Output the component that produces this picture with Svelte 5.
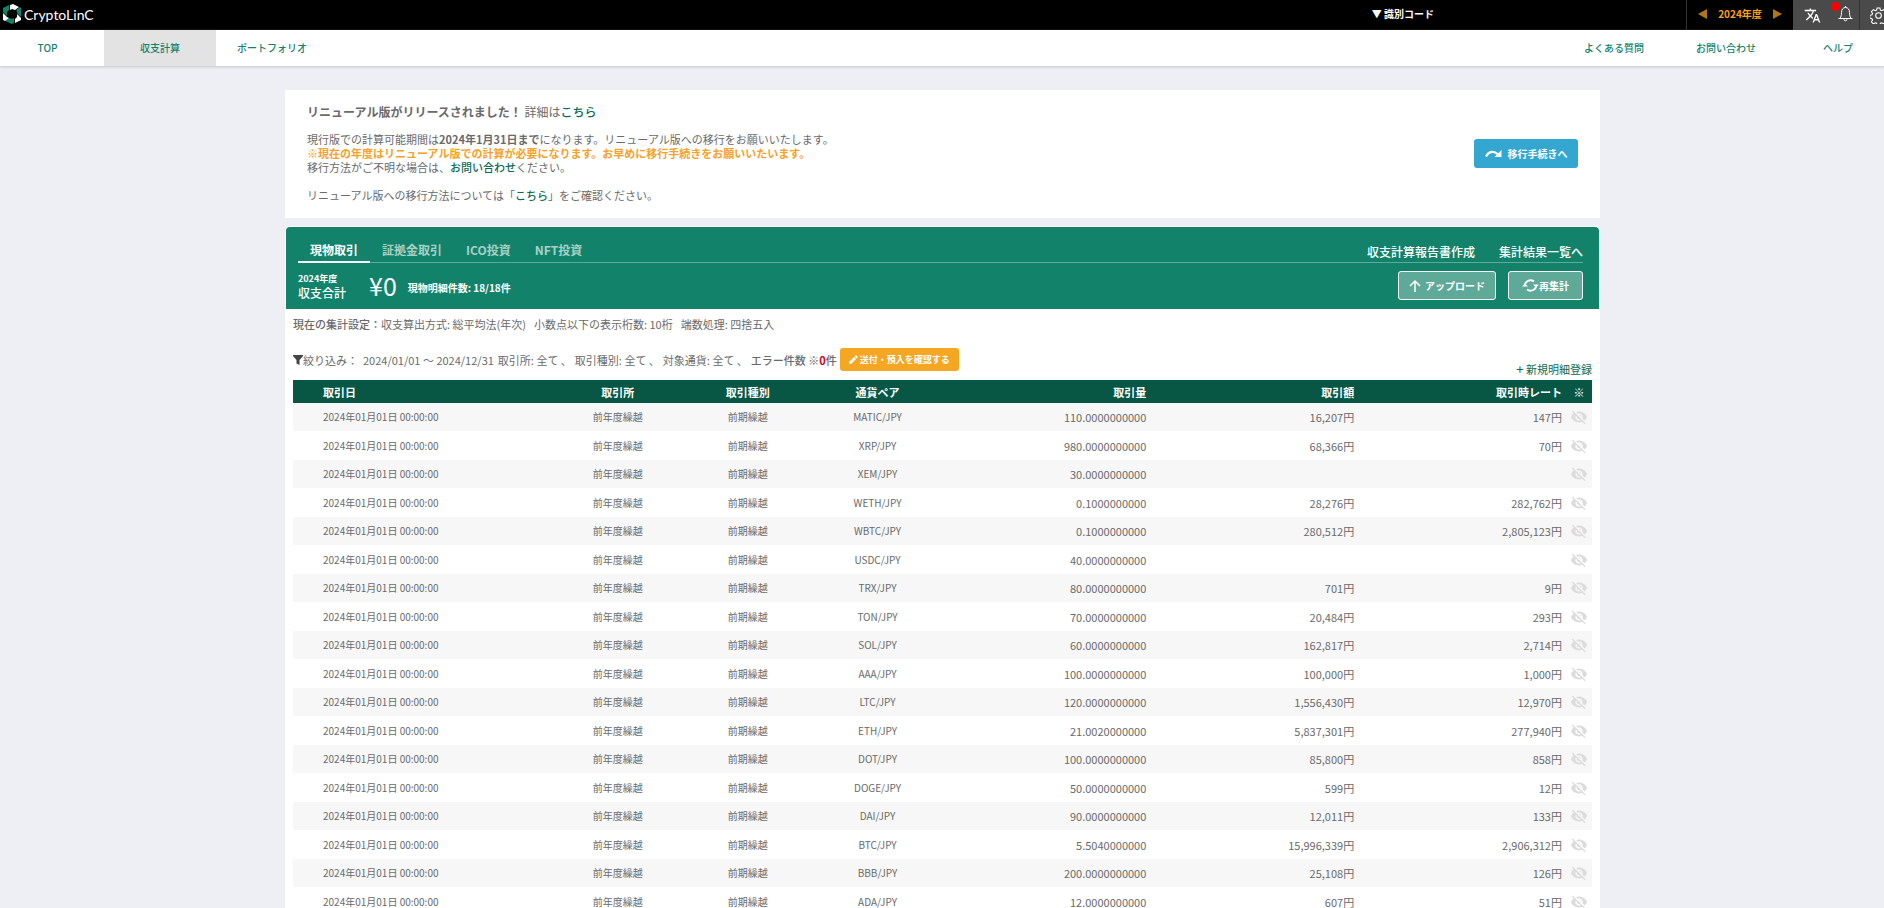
<script lang="ts">
	type Row = { exchange: string; kind: string; pair: string; amount: string; total: string; rate: string };

	let year = $state(2024);
	let activeTab = $state(0);

	const tabs = ['現物取引', '証拠金取引', 'ICO投資', 'NFT投資'];

	const source: [string, string, string, string][] = [
		['MATIC', '110.0000000000', '16,207円', '147円'],
		['XRP', '980.0000000000', '68,366円', '70円'],
		['XEM', '30.0000000000', '', ''],
		['WETH', '0.1000000000', '28,276円', '282,762円'],
		['WBTC', '0.1000000000', '280,512円', '2,805,123円'],
		['USDC', '40.0000000000', '', ''],
		['TRX', '80.0000000000', '701円', '9円'],
		['TON', '70.0000000000', '20,484円', '293円'],
		['SOL', '60.0000000000', '162,817円', '2,714円'],
		['AAA', '100.0000000000', '100,000円', '1,000円'],
		['LTC', '120.0000000000', '1,556,430円', '12,970円'],
		['ETH', '21.0020000000', '5,837,301円', '277,940円'],
		['DOT', '100.0000000000', '85,800円', '858円'],
		['DOGE', '50.0000000000', '599円', '12円'],
		['DAI', '90.0000000000', '12,011円', '133円'],
		['BTC', '5.5040000000', '15,996,339円', '2,906,312円'],
		['BBB', '200.0000000000', '25,108円', '126円'],
		['ADA', '12.0000000000', '607円', '51円']
	];

	const rows: Row[] = source.map(([coin, amount, total, rate]) => ({
		exchange: '前年度繰越',
		kind: '前期繰越',
		pair: `${coin}/JPY`,
		amount,
		total,
		rate
	}));
</script>

<header class="topbar">
	<a class="logo" href="/" aria-label="CryptoLinC">
		<svg width="20" height="22" viewBox="0 0 20 22">
			<path fill="#12836a" d="M1 5 7 2v5L5 9v4l-4-4z" />
			<path fill="#fff" d="M8 2l3-1 6 3-4 3-3-1-2 1z" />
			<path fill="#12836a" d="M14 7l4-3 1 1v9l-4-4V8z" />
			<path fill="#fff" d="M15 11l4 4v2l-6 3v-4l2-2z" />
			<path fill="#12836a" d="M12 20l-2 1-7-3 4-3 3 1 2-1z" />
			<path fill="#fff" d="M1 10l4 4 2 1-4 3-2-1z" />
		</svg>
		<span>CryptoLinC</span>
	</a>
	<button class="code">▼ 識別コード</button>
	<div class="year">
		<button aria-label="前年度" onclick={() => year--}>
			<svg width="9" height="10" viewBox="0 0 9 10"><path d="M9 0v10L0 5z" /></svg>
		</button>
		<span>{year}年度</span>
		<button aria-label="翌年度" onclick={() => year++}>
			<svg width="9" height="10" viewBox="0 0 9 10"><path d="M0 0v10l9-5z" /></svg>
		</button>
	</div>
	<div class="tools">
		<button aria-label="言語">
			<svg width="17" height="17" viewBox="0 0 24 24" fill="#fff">
				<path d="M12.87 15.07l-2.54-2.51.03-.03A17.5 17.5 0 0 0 14.07 6H17V4h-7V2H8v2H1v2h11.17A15.7 15.7 0 0 1 9 11.35 15.6 15.6 0 0 1 6.69 8h-2a17.6 17.6 0 0 0 2.98 4.56l-5.09 5.02L4 19l5-5 3.11 3.11zM18.5 10h-2L12 22h2l1.12-3h4.75L21 22h2zm-2.62 7 1.62-4.33L19.12 17z" />
			</svg>
		</button>
		<button class="bell" aria-label="お知らせ">
			<svg width="17" height="17" viewBox="0 0 17 17" fill="none" stroke="#fff">
				<path d="M1.500 13.500h14M3 13.500c1-2 1.500-3 1.500-6 0-3 1.500-5 4-5s4 2 4 5c0 3 .5 4 1.500 6M7 14c0 2.500 3 2.500 3 0M8.500 2.500V1" />
			</svg>
			<i></i>
		</button>
		<button class="gear" aria-label="設定">
			<svg width="17" height="17" viewBox="0 0 24 24" fill="none" stroke="#fff" stroke-width="1.500">
				<circle cx="12" cy="12" r="4" />
				<path d="M10 1.500h4l.7 3 1.800.8 2.700-1.600 2.900 2.900-1.700 2.600.8 1.900 2.900.7v4l-2.900.7-.8 1.800 1.600 2.600-2.800 2.900-2.700-1.600-1.800.7-.7 3h-4l-.7-3-1.800-.7-2.700 1.600-2.800-2.900 1.600-2.600-.8-1.800-3-.7v-4l3-.7.8-1.900L2 6.600l2.900-2.900 2.600 1.600 1.800-.8z" />
			</svg>
		</button>
	</div>
</header>

<nav class="nav">
	<a class="first" href="#top">TOP</a>
	<a class="current" href="#calc">収支計算</a>
	<a href="#portfolio">ポートフォリオ</a>
	<div class="help">
		<a href="#faq">よくある質問</a>
		<a href="#contact">お問い合わせ</a>
		<a href="#help">ヘルプ</a>
	</div>
</nav>

<main>
	<section class="notice">
		<div>
			<p class="lead"><b>リニューアル版がリリースされました！</b> 詳細は<a href="#detail">こちら</a></p>
			<p>現行版での計算可能期間は<b>2024年1月31日まで</b>になります。リニューアル版への移行をお願いいたします。</p>
			<p class="warn">※現在の年度はリニューアル版での計算が必要になります。お早めに移行手続きをお願いいたいます。</p>
			<p>移行方法がご不明な場合は、<a href="#contact">お問い合わせ</a>ください。</p>
			<p class="last">リニューアル版への移行方法については「<a href="#how">こちら</a>」をご確認ください。</p>
		</div>
		<button class="migrate">
			<svg width="17" height="8" viewBox="0 0 17 8">
				<path d="M1 6.500C4 1 9 .5 13 4.500" fill="none" stroke="#fff" stroke-width="2.200" />
				<path d="M16.500 0v7H9.500z" fill="#fff" />
			</svg>
			移行手続きへ
		</button>
	</section>

	<section class="panel">
		<div class="summary">
			<div class="tabs">
				{#each tabs as tab, i (tab)}
					<button class:active={activeTab == i} onclick={() => (activeTab = i)}>{tab}</button>
				{/each}
				<div class="reports">
					<a href="#report">収支計算報告書作成</a>
					<a href="#result">集計結果一覧へ</a>
				</div>
			</div>
			<div class="totals">
				<div class="label"><small>{year}年度</small>収支合計</div>
				<div class="yen">¥0</div>
				<div class="count">現物明細件数: 18/18件</div>
				<div class="actions">
					<button>
						<svg width="12" height="12" viewBox="0 0 12 12" fill="none" stroke="#fff" stroke-width="1.500"><path d="M6 12V1M1 6l5-5 5 5" /></svg>
						アップロード
					</button>
					<button class="recalc">
						<svg width="17" height="13" viewBox="0 0 17 13">
							<path d="M3 7a5.500 5 0 0 1 9-4.500M14 6a5.500 5 0 0 1-9 4.500" fill="none" stroke="#fff" stroke-width="1.800" />
							<path d="M0 7.500h6L3 4.500zM11 5.500h6l-3 3z" fill="#fff" />
						</svg>
						再集計
					</button>
				</div>
			</div>
		</div>

		<div class="body">
			<p class="settings">
				<span class="strong">現在の集計設定：</span><span>収支算出方式: 総平均法(年次)</span>
				<span>小数点以下の表示桁数: 10桁</span>
				<span>端数処理: 四捨五入</span>
			</p>
			<div class="filter">
				<div class="conditions">
					<svg width="10" height="10" viewBox="0 0 10 10"><path d="M0 0h10v1L6.500 5v5l-3-1.500V5L0 1z" fill="#444" /></svg>
					<span class="caption">絞り込み：</span>
					<span class="period">2024/01/01 ～ 2024/12/31</span>
					<span>取引所: 全て 、</span>
					<span>取引種別: 全て 、</span>
					<span>対象通貨: 全て 、</span>
					<span class="strong">エラー件数 <i>※</i><b>0</b>件</span>
					<button class="check">
						<svg width="9" height="9" viewBox="0 0 9 9" fill="#fff"><path d="M0 9V7l5-5 2 2-5 5zM5.500 1.500 7 0l2 2-1.500 1.500z" /></svg>
						送付・預入を確認する
					</button>
				</div>
				<a class="add" href="#new"><span>+</span> 新規明細登録</a>
			</div>

			<table>
				<thead>
					<tr>
						<th class="date">取引日</th>
						<th class="mid">取引所</th>
						<th class="mid">取引種別</th>
						<th class="mid">通貨ペア</th>
						<th class="num">取引量</th>
						<th class="num">取引額</th>
						<th class="num">取引時レート</th>
						<th class="eye">※</th>
					</tr>
				</thead>
				<tbody>
					{#each rows as row (row.pair)}
						<tr>
							<td class="date">2024年01月01日 00:00:00</td>
							<td class="mid">{row.exchange}</td>
							<td class="mid">{row.kind}</td>
							<td class="mid">{row.pair}</td>
							<td class="num">{row.amount}</td>
							<td class="num">{row.total}</td>
							<td class="num">{row.rate}</td>
							<td class="eye">
								<button aria-label="非表示">
									<svg width="18" height="16" viewBox="0 1 24 22" fill="#dcdcdc">
										<path d="M12 7a5 5 0 0 1 4.640 6.830l2.920 2.920A11.800 11.800 0 0 0 23 12C21.270 7.610 17 4.500 12 4.500c-1.400 0-2.740.25-3.980.7l2.160 2.160A5 5 0 0 1 12 7zM2 4.270l2.740 2.740A11.800 11.800 0 0 0 1 12c1.730 4.390 6 7.500 11 7.500 1.550 0 3.030-.3 4.380-.84L19.730 22 21 20.730 3.270 3zM7.530 9.800l1.550 1.550a3 3 0 0 0 3.570 3.570l1.550 1.550A5 5 0 0 1 7.530 9.800zm4.310-.78 3.150 3.150.02-.16a3 3 0 0 0-3-3z" />
									</svg>
								</button>
							</td>
						</tr>
					{/each}
				</tbody>
			</table>
		</div>
	</section>
</main>

<style>
	:global(body) {
		background: #edeff4;
		color: #6a6a6a;
		font-family: 'Noto Sans CJK JP', 'Noto Sans', sans-serif;
		font-size: 11px;
		line-height: 14px;
		overflow-x: hidden;
	}

	a {
		color: #0b6b55;
		text-decoration: none;
	}

	p {
		margin: 0;
	}

	button {
		display: flex;
		align-items: center;
		justify-content: center;
		padding: 0;
		border: none;
		background: none;
		color: #fff;
		font: inherit;
		font-weight: 700;
		cursor: pointer;
		white-space: nowrap;
	}

	.topbar {
		display: flex;
		height: 30px;
		background: #000;
		color: #fff;
		overflow: hidden;
	}

	.logo {
		display: flex;
		align-items: center;
		gap: 2px;
		padding-left: 2px;
		margin-right: auto;
		color: #fff;
		font-family: Lato, sans-serif;
		font-size: 14px;
	}

	.logo svg {
		margin-bottom: 2px;
	}

	.code {
		margin-right: 252px;
		padding-bottom: 2px;
		font-size: 10px;
	}

	.year {
		display: flex;
		align-items: center;
		justify-content: space-between;
		box-sizing: border-box;
		width: 107px;
		padding: 0 11px 2px;
		border-left: 1px solid #333;
		color: #f7a11a;
		font-size: 10px;
		font-weight: 700;
	}

	.year svg {
		fill: #b07719;
	}

	.tools {
		display: flex;
		flex: none;
		width: 91px;
		background: #4a4a4a;
	}

	.tools button {
		flex: none;
		width: 38px;
	}

	.tools .bell {
		position: relative;
		width: 28px;
		padding-bottom: 4px;
	}

	.bell i {
		position: absolute;
		top: 2px;
		left: 0;
		width: 9px;
		height: 9px;
		border-radius: 50%;
		background: #f00;
	}

	.tools .gear {
		border-left: 1px solid #333;
	}

	.nav {
		display: flex;
		height: 36px;
		background: #fff;
		border-bottom: 1px solid #d3d6da;
		box-shadow: 0 1px 2px #d8dade;
		font-size: 10px;
		font-weight: 500;
		overflow-x: clip;
	}

	.nav a {
		display: flex;
		align-items: center;
		justify-content: center;
		width: 112px;
		color: #12836a;
	}

	.nav .first {
		box-sizing: border-box;
		width: 104px;
		padding-right: 9px;
	}

	.nav .current {
		background: #e3e3e3;
	}

	.help {
		display: flex;
		margin-left: auto;
		margin-right: -10px;
	}

	main {
		max-width: 1315px;
		margin: 23px auto 0;
		padding-left: 1px;
	}

	.notice {
		display: flex;
		align-items: center;
		justify-content: space-between;
		padding: 15px 22px 16px;
		background: #fff;
	}

	.notice .lead {
		margin-bottom: 13px;
		font-size: 12px;
	}

	.notice .warn {
		color: #f7a128;
		font-weight: 700;
	}

	.notice .last {
		margin-top: 14px;
	}

	.notice a {
		font-weight: 500;
	}

	.migrate {
		gap: 6px;
		width: 104px;
		height: 29px;
		border-radius: 3px;
		background: #33a7cf;
		font-size: 10px;
	}

	.panel {
		margin-top: 8px;
		padding: 1px;
		border-radius: 5px 5px 0 0;
		background: #fff;
	}

	.summary {
		padding: 9px 16px 9px 12px;
		border-radius: 4px 4px 0 0;
		background: #12836a;
		color: #fff;
	}

	.tabs {
		display: flex;
		border-bottom: 1px solid #5ea998;
	}

	.tabs button {
		height: 27px;
		margin-bottom: -1px;
		padding: 2px 12px 0;
		border-bottom: 2px solid transparent;
		color: #a8d1c6;
		font-size: 12px;
	}

	.tabs .active {
		border-color: #fff;
		color: #fff;
	}

	.reports {
		display: flex;
		align-items: flex-end;
		gap: 24px;
		margin-left: auto;
		font-size: 12px;
		font-weight: 500;
	}

	.reports a {
		padding-bottom: 3px;
		color: #fff;
	}

	.totals {
		display: flex;
		align-items: center;
		margin-top: 8px;
		font-weight: 700;
	}

	.label {
		width: 71px;
		font-size: 12px;
		font-weight: 500;
	}

	.label small {
		display: block;
		font-size: 9px;
		font-weight: 700;
	}

	.yen {
		margin-right: 11px;
		padding-bottom: 2px;
		font-size: 25px;
		font-weight: 400;
	}

	.count {
		padding-top: 4px;
		font-size: 10px;
	}

	.actions {
		display: flex;
		gap: 12px;
		margin-left: auto;
	}

	.actions button {
		box-sizing: border-box;
		gap: 4px;
		width: 98px;
		height: 29px;
		border: 1px solid #fff;
		border-radius: 3px;
		background: #5ea998;
		font-size: 10px;
	}

	.actions .recalc {
		gap: 0;
		width: 75px;
	}

	.body {
		padding: 8px 7px 0;
	}

	.settings {
		display: flex;
		gap: 8px;
	}

	.settings .strong {
		margin-right: -8px;
	}

	.strong {
		font-weight: 500;
	}

	.filter {
		display: flex;
		align-items: flex-end;
		justify-content: space-between;
		margin-top: 17px;
		height: 32px;
	}

	.conditions {
		display: flex;
		align-self: flex-start;
		align-items: center;
		gap: 3px;
	}

	.conditions .caption {
		margin-left: -3px;
		margin-right: 2px;
	}

	.conditions .period {
		margin-right: 1px;
	}

	.conditions i {
		font-style: normal;
		font-weight: 400;
	}

	.conditions b {
		color: #d0021b;
	}

	.check {
		gap: 2px;
		width: 119px;
		height: 23px;
		border-radius: 3px;
		background: #f5a623;
		font-size: 9px;
	}

	.add {
		padding-bottom: 4px;
	}

	.add span {
		font-size: 13px;
	}

	table {
		width: 100%;
		border-collapse: collapse;
		table-layout: fixed;
	}

	th,
	td {
		padding: 0;
		text-align: center;
	}

	th {
		height: 23px;
		background: #085745;
		color: #fff;
		font-weight: 700;
	}

	td {
		height: 28px;
	}

	tbody tr:nth-child(odd) {
		background: #f7f7f7;
	}

	tbody tr:nth-child(even) td {
		height: 29px;
	}

	.date {
		width: 20%;
		padding-left: 30px;
		box-sizing: border-box;
		text-align: left;
	}

	.mid {
		width: 10%;
	}

	td.date,
	td.mid {
		font-size: 10px;
	}

	.num {
		width: 16%;
		padding-right: 4px;
		box-sizing: border-box;
		text-align: right;
	}

	.eye {
		width: 2%;
	}

	.eye button {
		margin: 0 auto;
	}
</style>
